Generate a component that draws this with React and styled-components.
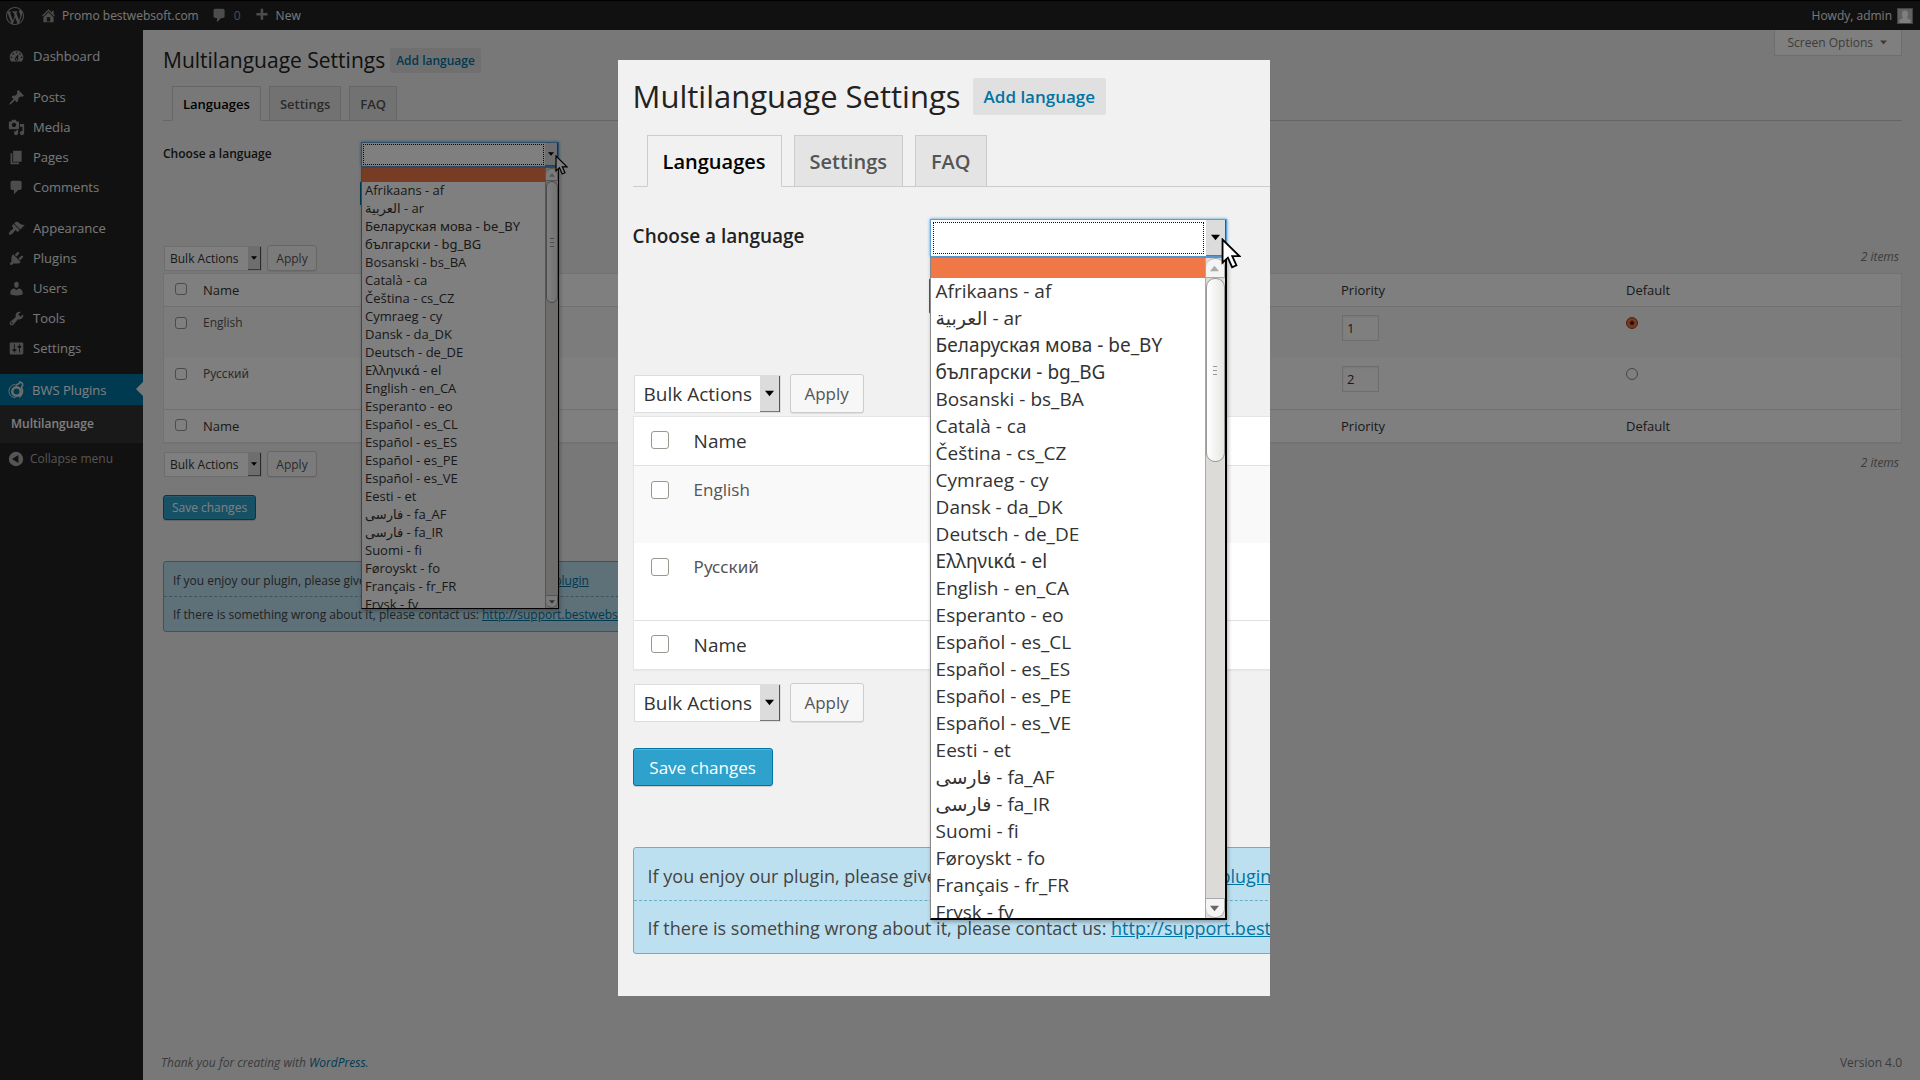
import React, { useId } from "react";
import styled, { createGlobalStyle, ThemeProvider, css } from "styled-components";

const GlobalStyle = createGlobalStyle`
  *, *::before, *::after { box-sizing: border-box; }
  html, body { margin: 0; padding: 0; }
  body {
    background: #f1f1f1;
    color: #444;
    font-family: "Open Sans", "Noto Sans", "DejaVu Sans", sans-serif;
    font-size: 12px;
  }
  :lang(be), :lang(bg), :lang(ru), :lang(el) { font-family: "Noto Sans", "Open Sans", sans-serif; }
  button, input, select { font-family: inherit; margin: 0; }
  h1, p, ul { margin: 0; padding: 0; }
  ul { list-style: none; }
  a { color: #0074a2; }
`;

/* Two densities of the same settings panel: the page itself and the enlarged lens. */
const compact = {
  title: 21, small: 12, text: 12, label: 12, note: 12, strong: 13, tab: 13, option: 13, select: 12,
  padTop: 18, headGap: 5, headHeight: 25, headPad: 6, headBottom: 13,
  tabHeight: 35, tabPad: 10, tabGap: 8, tabInset: 9,
  formTop: 21, labelWidth: 197, labelLift: 2, selectWidth: 198, fieldHeight: 25, focusInset: 2,
  addTop: 14, addHeight: 25, navTop: 39, arrow: 13, glyph: 6,
  bulkWidth: 98, bulkPad: 5, bulkGap: 5, applyWidth: 50, navGap: 2,
  box: 12, boxCell: 39, boxPad: 11, headRow: 32, row: 51, cellTop: 8, boxTop: 2, line: 16,
  afterTable: 8, saveTop: 18, saveWidth: 93,
  noteTop: 41, noteRow: 34, notePad: 9, noteLine: 33,
  popHeight: 442, popBlank: 14, popItem: 18, popLine: 16, popPad: 3, popEdge: 1,
  barCap: 13, thumb: 122,
  cursor: 13, cursorLeft: 194, cursorTop: 13,
};
const large = {
  title: 31, small: 17, text: 17, label: 19, note: 18, strong: 19, tab: 20, option: 19, select: 19,
  padTop: 18, headGap: 12, headHeight: 37, headPad: 11, headBottom: 20,
  tabHeight: 52, tabPad: 15, tabGap: 12, tabInset: 14,
  formTop: 32, labelWidth: 296, labelLift: 4, selectWidth: 297, fieldHeight: 38, focusInset: 3,
  addTop: 21, addHeight: 36, navTop: 60, arrow: 20, glyph: 9,
  bulkWidth: 147, bulkPad: 9, bulkGap: 9, applyWidth: 74, navGap: 3,
  box: 18, boxCell: 60, boxPad: 17, headRow: 48, row: 77, cellTop: 12, boxTop: 3, line: 24,
  afterTable: 13, saveTop: 26, saveWidth: 140,
  noteTop: 61, noteRow: 52, notePad: 14, noteLine: 52,
  popHeight: 663, popBlank: 20, popItem: 27, popLine: 27, popPad: 5, popEdge: 2,
  barCap: 20, thumb: 184,
  cursor: 20, cursorLeft: 291, cursorTop: 19,
};
const px = (key) => ({ theme }) => `${theme[key]}px`;

/* ---------- admin bar ---------- */
const TopBar = styled.header`
  display: flex;
  align-items: center;
  height: 30px;
  padding: 0 7px 0 6px;
  border-top: 1px solid #000;
  background: #222;
  color: #eee;
`;
const BarLink = styled.a`
  display: flex;
  align-items: center;
  gap: ${({ $gap = 8 }) => $gap}px;
  margin-right: ${({ $after = 13 }) => $after}px;
  color: ${({ $muted }) => ($muted ? "#999" : "#eee")};
  text-decoration: none;
  white-space: nowrap;
  svg { color: #999; }
`;
const Account = styled(BarLink)`
  margin: 0 0 0 auto;
`;
const Avatar = styled.span`
  display: block;
  width: 16px;
  height: 16px;
  border: 1px solid #82878c;
  background: #c3c3c3;
  svg { display: block; color: #fff; }
`;

/* ---------- side menu ---------- */
const Shell = styled.div`
  display: flex;
  min-height: calc(100vh - 30px);
`;
const Side = styled.nav`
  flex: none;
  width: 143px;
  padding-top: 11px;
  background: #222;
`;
const MenuGroup = styled.ul`
  margin-bottom: 11px;
`;
const MenuLink = styled.a`
  position: relative;
  display: flex;
  align-items: center;
  gap: 8px;
  height: ${({ $active }) => ($active ? 31 : 30)}px;
  padding-left: 8px;
  color: ${({ $active }) => ($active ? "#fff" : "#eee")};
  font-size: 13px;
  text-decoration: none;
  svg { flex: none; color: #999; }
  ${({ $active }) => $active && css`
    background: #0074a2;
    svg { color: #ddd; }
    &::after {
      content: "";
      position: absolute;
      right: 0;
      top: 8px;
      border: 7px solid transparent;
      border-left-width: 0;
      border-right-color: #f1f1f1;
    }
  `}
`;
const SubLink = styled.a`
  display: flex;
  align-items: center;
  height: 38px;
  padding: 0 0 2px 11px;
  background: #333;
  color: #fff;
  font-weight: 600;
  text-decoration: none;
`;
const Collapse = styled.button`
  display: flex;
  align-items: center;
  gap: 6px;
  height: 31px;
  padding: 0 0 0 8px;
  border: 0;
  background: none;
  color: #aaa;
  font-size: 12px;
  svg { color: #aaa; }
`;

/* ---------- page body ---------- */
const Content = styled.div`
  position: relative;
  display: flex;
  flex: 1;
  flex-direction: column;
  min-width: 0;
  padding: 0 18px 8px 20px;
`;
const ScreenOptions = styled.button`
  position: absolute;
  top: 0;
  right: 18px;
  display: flex;
  align-items: center;
  gap: 7px;
  height: 26px;
  padding: 0 14px 0 13px;
  border: 1px solid #ddd;
  border-top: 0;
  background: #fff;
  color: #777;
  font-size: 12px;
`;
const Footer = styled.footer`
  display: flex;
  justify-content: space-between;
  margin: auto 0 0 -2px;
  color: #777;
  font-size: 12px;
  line-height: 18px;
  a { text-decoration: none; }
`;

/* ---------- settings panel ---------- */
const Panel = styled.section`
  padding-top: ${px("padTop")};
  color: #444;
  font-size: ${px("text")};
`;
const Heading = styled.div`
  display: flex;
  align-items: center;
  gap: ${px("headGap")};
  height: ${px("headHeight")};
  margin-bottom: ${px("headBottom")};
`;
const Title = styled.h1`
  color: #222;
  font-size: ${px("title")};
  font-weight: 400;
  line-height: ${px("headHeight")};
  white-space: nowrap;
`;
const HeadLink = styled.a`
  padding: 0 ${px("headPad")};
  border-radius: 2px;
  background: #e0e0e0;
  font-size: ${px("small")};
  font-weight: 600;
  line-height: ${px("headHeight")};
  text-decoration: none;
  white-space: nowrap;
`;
const Tabs = styled.div`
  display: flex;
  gap: ${px("tabGap")};
  padding-left: ${px("tabInset")};
  border-bottom: 1px solid #ccc;
`;
const Tab = styled.a`
  display: flex;
  align-items: center;
  height: ${px("tabHeight")};
  margin-bottom: -1px;
  padding: 0 ${px("tabPad")};
  border: 1px solid #ccc;
  border-bottom-color: ${({ $active }) => ($active ? "#f1f1f1" : "#ccc")};
  background: ${({ $active }) => ($active ? "#f1f1f1" : "#e4e4e4")};
  color: ${({ $active }) => ($active ? "#000" : "#555")};
  font-size: ${px("tab")};
  font-weight: 600;
  text-decoration: none;
`;
const FormRow = styled.div`
  display: flex;
  align-items: center;
  margin-top: ${px("formTop")};
`;
const FieldLabel = styled.label`
  flex: none;
  width: ${px("labelWidth")};
  padding-bottom: ${px("labelLift")};
  color: #222;
  font-size: ${px("label")};
  font-weight: 600;
`;
const Picker = styled.div`
  position: relative;
  width: ${({ theme, $wide }) => ($wide ? theme.selectWidth : theme.bulkWidth)}px;
  margin-left: 1px;
`;
const Select = styled.select`
  display: block;
  width: 100%;
  height: ${px("fieldHeight")};
  padding: 0 ${px("arrow")} 0 ${px("bulkPad")};
  border: 1px solid ${({ $focused }) => ($focused ? "#5b9dd9" : "#ddd")};
  border-radius: 0;
  outline: 0;
  appearance: none;
  background: #fff;
  box-shadow: ${({ $focused }) => ($focused ? "0 0 3px rgba(30, 140, 190, 0.8)" : "none")};
  color: #333;
  font-size: ${px("select")};
`;
const Arrow = styled.span`
  position: absolute;
  top: 1px;
  right: 1px;
  bottom: 1px;
  display: flex;
  align-items: center;
  justify-content: center;
  width: ${px("arrow")};
  border-right: 1px solid #555;
  border-bottom: 1px solid #777;
  background: #dcdcdc;
  color: #000;
  pointer-events: none;
`;
const FocusRing = styled.span`
  position: absolute;
  top: ${px("focusInset")};
  bottom: ${px("focusInset")};
  left: ${px("focusInset")};
  right: ${({ theme }) => theme.arrow + theme.focusInset}px;
  border: 1px dotted #111;
  pointer-events: none;
`;
const Cursor = styled.svg`
  position: absolute;
  z-index: 3;
  left: ${px("cursorLeft")};
  top: ${px("cursorTop")};
  width: ${px("cursor")};
`;
const Popup = styled.div`
  position: absolute;
  z-index: 2;
  top: 100%;
  left: 0;
  display: flex;
  width: 100%;
  height: ${px("popHeight")};
  border: 1px solid #888;
  border-right: ${px("popEdge")} solid #000;
  border-bottom: ${px("popEdge")} solid #000;
  background: #fff;
  box-shadow: 1px 2px 4px rgba(0, 0, 0, 0.3);
`;
const Options = styled.ul`
  flex: 1;
  min-width: 0;
  overflow: hidden;
`;
const Option = styled.li`
  height: ${({ theme, $blank }) => ($blank ? theme.popBlank : theme.popItem)}px;
  padding-left: ${px("popPad")};
  background: ${({ $blank }) => ($blank ? "#f07746" : "transparent")};
  color: #333;
  font-size: ${px("option")};
  line-height: ${px("popLine")};
  white-space: nowrap;
`;
const Bar = styled.div`
  display: flex;
  flex: none;
  flex-direction: column;
  width: ${px("barCap")};
  border-left: 1px solid #aaa;
  background: #dddbd8;
`;
const BarEnd = styled.span`
  display: flex;
  align-items: center;
  justify-content: center;
  height: ${px("barCap")};
  border: 1px solid #aaa;
  border-radius: ${({ $up }) => ($up ? "9px 9px 0 0" : "0 0 9px 9px")};
  border-left: 0;
  background: #f4f4f4;
  color: ${({ $up }) => ($up ? "#aaa" : "#666")};
`;
const Thumb = styled.span`
  display: flex;
  flex-direction: column;
  align-items: center;
  justify-content: center;
  gap: 3px;
  height: ${px("thumb")};
  margin-bottom: auto;
  border: 1px solid #999;
  border-radius: 9px;
  background: linear-gradient(90deg, #fff, #e6e6e4);
  i { width: 4px; height: 1px; background: #999; }
`;
const AddButton = styled.button`
  display: block;
  height: ${px("addHeight")};
  margin: ${px("addTop")} 0 0 ${px("labelWidth")};
  padding: 0 ${px("notePad")};
  border: 1px solid #0074a2;
  border-radius: 2px;
  background: #2ea2cc;
  color: #fff;
  font-size: ${px("small")};
`;
const TableNav = styled.div`
  display: flex;
  align-items: center;
  gap: ${px("bulkGap")};
  margin: ${({ theme, $top }) => ($top ? `${theme.navTop}px 0 ${theme.navGap}px` : `${theme.afterTable}px 0 0`)};
`;
const Apply = styled.button`
  width: ${px("applyWidth")};
  height: ${({ theme }) => theme.fieldHeight + 1}px;
  padding: 0;
  border: 1px solid #ccc;
  border-radius: 3px;
  background: #f7f7f7;
  box-shadow: 0 1px 0 rgba(0, 0, 0, 0.08);
  color: #555;
  font-size: ${px("small")};
`;
const Count = styled.span`
  margin: 0 3px 4px auto;
  color: #777;
  font-size: 12px;
  font-style: italic;
`;
const Table = styled.table`
  width: 100%;
  border: 1px solid #e5e5e5;
  border-right-width: ${({ $open }) => ($open ? 0 : 1)}px;
  border-spacing: 0;
  background: #fff;
  table-layout: fixed;
  box-shadow: 0 1px 1px rgba(0, 0, 0, 0.04);
  th, td { padding: 0; text-align: left; }
  th {
    height: ${({ theme }) => theme.headRow + 1}px;
    color: #333;
    font-size: ${px("strong")};
    font-weight: 400;
  }
  thead th { border-bottom: 1px solid #e1e1e1; }
  tfoot th { border-top: 1px solid #e1e1e1; }
  td {
    height: ${px("row")};
    padding-top: ${px("cellTop")};
    color: #555;
    line-height: ${px("line")};
    vertical-align: top;
  }
  tbody tr:first-child { background: #f9f9f9; }
`;
const BoxCol = styled.col`
  width: ${px("boxCell")};
`;
const WideCol = styled.col`
  width: ${({ $last }) => ($last ? 275 : 285)}px;
`;
const Check = styled.input`
  display: block;
  width: ${px("box")};
  height: ${px("box")};
  margin: 0 0 0 ${px("boxPad")};
  border: 1px solid #9a9690;
  border-radius: 3px;
  appearance: none;
  background: #fff;
  th & { position: relative; top: -1px; }
  td & { margin-top: ${px("boxTop")}; }
`;
const Radio = styled.input`
  display: block;
  width: 12px;
  height: 12px;
  margin-top: 2px;
  border: 1px solid #888;
  border-radius: 50%;
  appearance: none;
  background: #fff;
  &:checked {
    border-color: #9c3d17;
    background: radial-gradient(circle, #3a1405 0 1px, #f07746 3px);
  }
`;
const Priority = styled.input`
  display: block;
  width: 37px;
  height: 26px;
  margin-left: 1px;
  padding: 2px 4px;
  border: 1px solid #ddd;
  background: #fff;
  box-shadow: inset 0 1px 2px rgba(0, 0, 0, 0.07);
  color: #333;
  font-size: 13px;
`;
const Save = styled.button`
  display: block;
  width: ${px("saveWidth")};
  height: ${px("fieldHeight")};
  margin-top: ${px("saveTop")};
  padding: 0;
  border: 1px solid #0074a2;
  border-radius: 3px;
  background: #2ea2cc;
  box-shadow: inset 0 1px 0 rgba(120, 200, 230, 0.5), 0 1px 0 rgba(0, 0, 0, 0.15);
  color: #fff;
  font-size: ${px("small")};
`;
const Note = styled.div`
  width: max-content;
  margin-top: ${px("noteTop")};
  border: 1px solid #6eadc8;
  border-radius: 3px;
  background: #bde0f0;
  font-size: ${px("note")};
  p {
    height: ${px("noteRow")};
    padding: 2px ${px("notePad")} 0;
    color: #444;
    line-height: ${px("noteLine")};
    white-space: nowrap;
  }
  p + p {
    height: ${({ theme }) => theme.noteRow + 1}px;
    padding-top: 1px;
    border-top: 1px dashed #6eadc8;
  }
`;

/* ---------- lens ---------- */
const Overlay = styled.div`
  position: fixed;
  z-index: 10;
  inset: 0;
  display: flex;
  align-items: flex-start;
  justify-content: center;
  padding: 60px 32px 0 0;
  background: rgba(0, 0, 0, 0.5);
`;
const Lens = styled.div`
  width: 34vw;
  padding: 0 0 42px 15px;
  overflow: hidden;
  background: #f1f1f1;
`;

/* ---------- icons ---------- */
const icons = {
  wordpress: "M20 10c0-5.51-4.49-10-10-10C4.48 0 0 4.49 0 10c0 5.52 4.48 10 10 10 5.51 0 10-4.48 10-10zM7.78 15.37L4.37 6.22c.55-.02 1.17-.08 1.17-.08.5-.06.44-1.13-.06-1.11 0 0-1.45.11-2.37.11-.18 0-.37 0-.58-.01C4.12 2.69 6.87 1.11 10 1.11c2.33 0 4.45.87 6.05 2.34-.68-.11-1.65.39-1.65 1.58 0 .74.45 1.36.9 2.1.35.61.55 1.36.55 2.46 0 1.49-1.4 5-1.4 5l-3.03-8.37c.54-.02.82-.17.82-.17.5-.05.44-1.25-.06-1.22 0 0-1.44.12-2.38.12-.87 0-2.33-.12-2.33-.12-.5-.03-.56 1.2-.06 1.22l.92.08 1.26 3.41zM17.41 10c.24-.64.74-1.87.43-4.25.7 1.29 1.05 2.71 1.05 4.25 0 3.29-1.73 6.24-4.4 7.78.97-2.59 1.94-5.2 2.92-7.78zM6.1 18.09C3.12 16.65 1.11 13.53 1.11 10c0-1.3.23-2.48.72-3.59C3.25 10.3 4.67 14.2 6.1 18.09zm4.03-6.63l2.58 6.98c-.86.29-1.76.45-2.71.45-.79 0-1.57-.11-2.29-.33.81-2.38 1.62-4.74 2.42-7.1z",
  home: "M16 8.5l1.53 1.53-1.06 1.06L10 4.6l-6.47 6.49-1.06-1.06L10 2.5l4 4v-2h2v4zm-6-2.46l6 5.99V18H4v-5.97zM12 17v-5H8v5h4z",
  comment: "M5 2h9c1.1 0 2 .9 2 2v7c0 1.1-.9 2-2 2h-2l-5 5v-5H5c-1.1 0-2-.9-2-2V4c0-1.1.9-2 2-2z",
  plus: "M17 7v3h-5v5H9v-5H4V7h5V2h3v5h5z",
  dashboard: "M3.76 16h12.48c1.1-1.37 1.76-3.11 1.76-5 0-4.42-3.58-8-8-8s-8 3.58-8 8c0 1.89.66 3.63 1.76 5zM10 4c.55 0 1 .45 1 1s-.45 1-1 1-1-.45-1-1 .45-1 1-1zM6 6c.55 0 1 .45 1 1s-.45 1-1 1-1-.45-1-1 .45-1 1-1zm8 0c.55 0 1 .45 1 1s-.45 1-1 1-1-.45-1-1 .45-1 1-1zm-5.37 5.55L12 7v6c0 1.1-.9 2-2 2s-2-.9-2-2c0-.57.24-1.08.63-1.45zM4 10c.55 0 1 .45 1 1s-.45 1-1 1-1-.45-1-1 .45-1 1-1zm12 0c.55 0 1 .45 1 1s-.45 1-1 1-1-.45-1-1 .45-1 1-1zm-5 3c0-.55-.45-1-1-1s-1 .45-1 1 .45 1 1 1 1-.45 1-1z",
  post: "M10.44 3.02l1.82-1.82 6.36 6.35-1.83 1.82c-1.05-.68-2.48-.57-3.41.36l-.75.75c-.92.93-1.04 2.35-.35 3.41l-1.83 1.82-2.41-2.41-2.8 2.79c-.42.42-3.38 2.71-3.8 2.29s1.86-3.39 2.28-3.81l2.79-2.79L4.1 9.36l1.83-1.82c1.05.69 2.48.57 3.4-.36l.75-.75c.93-.92 1.05-2.35.36-3.41z",
  media: "M13 11V4c0-.55-.45-1-1-1h-1.67L9 1H5L3.67 3H2c-.55 0-1 .45-1 1v7c0 .55.45 1 1 1h10c.55 0 1-.45 1-1zM7 4.5c1.38 0 2.5 1.12 2.5 2.5S8.38 9.5 7 9.5 4.5 8.38 4.5 7 5.62 4.5 7 4.5zM14 6h5v10.5c0 1.38-1.12 2.5-2.5 2.5S14 17.88 14 16.5s1.12-2.5 2.5-2.5c.17 0 .34.02.5.05V9h-3V6zm-4 8.05V13h2v3.5c0 1.38-1.12 2.5-2.5 2.5S7 17.88 7 16.5 8.12 14 9.5 14c.17 0 .34.02.5.05z",
  page: "M6 15V2h10v13H6zm-1 1h8v2H3V5h2v11z",
  appearance: "M14.48 11.06L7.41 3.99l1.5-1.5c.5-.56 2.3-.47 3.51.32 1.21.8 1.43 1.28 2.91 2.1 1.18.64 2.45 1.26 4.45.85zm-.71.71L6.7 4.7 4.93 6.47c-.39.39-.39 1.02 0 1.41l1.06 1.06c.39.39.39 1.03 0 1.42-.6.6-1.43 1.11-2.21 1.69-.35.26-.7.53-1.01.84C1.43 14.23.4 16.08 1.4 17.07c.99 1 2.84-.03 4.18-1.36.31-.31.58-.66.85-1.02.57-.78 1.08-1.61 1.69-2.21.39-.39 1.02-.39 1.41 0l1.06 1.06c.39.39 1.02.39 1.41 0z",
  plugins: "M13.11 4.36L9.87 7.6 8 5.73l3.24-3.24c.35-.34 1.05-.2 1.56.32.52.51.66 1.21.31 1.55zm-8 1.77l.91-1.12 9.01 9.01-1.19.84c-.71.71-2.63 1.16-3.82 1.16H6.14L4.9 17.26c-.59.59-1.54.59-2.12 0-.59-.58-.59-1.53 0-2.12l1.24-1.24v-3.88c0-1.13.4-3.19 1.09-3.89zm7.26 3.97l3.24-3.24c.34-.35 1.04-.21 1.55.31.52.51.66 1.21.31 1.55l-3.24 3.25z",
  users: "M10 9.25c-2.27 0-2.73-3.44-2.73-3.44C7 4.02 7.82 2 9.97 2c2.16 0 2.98 2.02 2.71 3.81 0 0-.41 3.44-2.68 3.44zm0 2.57L12.72 10c2.39 0 4.52 2.33 4.52 4.53v2.49s-3.65 1.13-7.24 1.13c-3.65 0-7.24-1.13-7.24-1.13v-2.49c0-2.25 1.94-4.48 4.47-4.48z",
  tools: "M16.68 9.77c-1.34 1.34-3.3 1.67-4.95.99l-5.41 6.52c-.99.99-2.59.99-3.58 0s-.99-2.59 0-3.57l6.52-5.42c-.68-1.65-.35-3.61.99-4.95 1.28-1.28 3.12-1.62 4.72-1.06l-2.89 2.89 2.82 2.82 2.86-2.87c.53 1.58.18 3.39-1.08 4.65zM3.81 16.21c.4.39 1.04.39 1.43 0 .4-.4.4-1.04 0-1.43-.39-.4-1.03-.4-1.43 0-.39.39-.39 1.03 0 1.43z",
  settings: "M18 16V4c0-.55-.45-1-1-1H3c-.55 0-1 .45-1 1v12c0 .55.45 1 1 1h14c.55 0 1-.45 1-1zM8 11h1c.55 0 1 .45 1 1s-.45 1-1 1H8v1.500c0 .28-.22.5-.5.5s-.5-.22-.5-.5V13H6c-.55 0-1-.45-1-1s.45-1 1-1h1V5.500c0-.28.22-.5.5-.5s.5.22.5.5V11zm5-2h-1c-.55 0-1-.45-1-1s.45-1 1-1h1V5.500c0-.28.22-.5.5-.5s.5.22.5.5V7h1c.55 0 1 .45 1 1s-.45 1-1 1h-1v5.500c0 .28-.22.5-.5.5s-.5-.22-.5-.5V9z",
  collapse: "M10 1a9 9 0 1 0 0 18 9 9 0 0 0 0-18zm3 4v10l-8-5z",
};
const Icon = ({ name, size = 18 }) => (
  <svg width={size} height={size} viewBox="0 0 20 20" fill="currentColor" fillRule="evenodd" aria-hidden="true">
    <path d={icons[name]} />
  </svg>
);
const SwirlIcon = () => (
  <svg width="16" height="18" viewBox="0 0 16 18" fill="none" stroke="currentColor" aria-hidden="true">
    <circle cx="8.5" cy="10.500" r="4.200" strokeWidth="2.400" />
    <path d="M7 3.5C3 4 .8 7 1 10.500C1.200 14 3.500 16.500 7.500 16.500" strokeWidth="1" />
    <path d="M7.500 4.500C10 2 12.500 3 12 1C15 1.500 15.500 4 13.500 6.500C15.500 10 14.500 14 11 16" strokeWidth="1.600" />
  </svg>
);
const Triangle = ({ size, up }) => (
  <svg width={size} height={size} viewBox="0 0 10 10" fill="currentColor" aria-hidden="true">
    <path d={up ? "M0 8L5 2L10 8Z" : "M0 2H10L5 8Z"} />
  </svg>
);

/* ---------- data ---------- */
const languages = [
  ["Afrikaans - af"], ["العربية - ar"], ["Беларуская мова - be_BY", "be"], ["български - bg_BG", "bg"],
  ["Bosanski - bs_BA"], ["Català - ca"], ["Čeština - cs_CZ"], ["Cymraeg - cy"], ["Dansk - da_DK"],
  ["Deutsch - de_DE"], ["Ελληνικά - el", "el"], ["English - en_CA"], ["Esperanto - eo"], ["Español - es_CL"],
  ["Español - es_ES"], ["Español - es_PE"], ["Español - es_VE"], ["Eesti - et"], ["فارسی - fa_AF"],
  ["فارسی - fa_IR"], ["Suomi - fi"], ["Føroyskt - fo"], ["Français - fr_FR"], ["Frysk - fy"],
];
const enabled = [
  { name: "English", lang: "en", priority: 1, isDefault: true },
  { name: "Русский", lang: "ru", priority: 2, isDefault: false },
];
const menu = [
  [["dashboard", "Dashboard"]],
  [["post", "Posts"], ["media", "Media"], ["page", "Pages"], ["comment", "Comments"]],
  [["appearance", "Appearance"], ["plugins", "Plugins"], ["users", "Users"], ["tools", "Tools"], ["settings", "Settings"]],
];

function LanguagePicker({ id, t }) {
  return (
    <Picker $wide>
      <Select id={id} $focused defaultValue="">
        <option value="" aria-label="No language" />
      </Select>
      <FocusRing />
      <Arrow><Triangle size={t.glyph} /></Arrow>
      <Popup>
        <Options role="listbox" aria-label="Languages">
          <Option role="option" aria-selected="true" aria-label="No language" $blank />
          {languages.map(([name, lang]) => (
            <Option key={name} lang={lang} role="option" aria-selected="false">{name}</Option>
          ))}
        </Options>
        <Bar aria-hidden="true">
          <BarEnd $up><Triangle size={t.glyph} up /></BarEnd>
          <Thumb><i /><i /><i /></Thumb>
          <BarEnd><Triangle size={t.glyph} /></BarEnd>
        </Bar>
      </Popup>
      <Cursor viewBox="0 0 13 20" aria-hidden="true">
        <path d="M1 1V16L4.500 12.800L7.200 19L10 17.700L7.300 11.800H12Z" fill="#fff" stroke="#000" strokeWidth="1.200" />
      </Cursor>
    </Picker>
  );
}

function BulkNav({ t, top, count }) {
  return (
    <TableNav $top={top}>
      <Picker>
        <Select aria-label="Bulk Actions" defaultValue="bulk">
          <option value="bulk">Bulk Actions</option>
        </Select>
        <Arrow><Triangle size={t.glyph} /></Arrow>
      </Picker>
      <Apply type="button">Apply</Apply>
      {count && <Count>2 items</Count>}
    </TableNav>
  );
}

function LanguageTable({ full, group }) {
  const labels = (
    <tr>
      <th scope="col"><Check type="checkbox" aria-label="Select all" /></th>
      <th scope="col">Name</th>
      {full && <th scope="col">Priority</th>}
      {full && <th scope="col">Default</th>}
    </tr>
  );
  return (
    <Table $open={!full}>
      <colgroup>
        <BoxCol />
        <col />
        {full && <WideCol />}
        {full && <WideCol $last />}
      </colgroup>
      <thead>{labels}</thead>
      <tbody>
        {enabled.map(({ name, lang, priority, isDefault }) => (
          <tr key={name}>
            <td><Check type="checkbox" aria-label={`Select ${name}`} /></td>
            <td lang={lang}>{name}</td>
            {full && <td><Priority type="text" defaultValue={priority} aria-label={`Priority of ${name}`} /></td>}
            {full && <td><Radio type="radio" name={group} defaultChecked={isDefault} aria-label={`${name} is default`} /></td>}
          </tr>
        ))}
      </tbody>
      <tfoot>{labels}</tfoot>
    </Table>
  );
}

function SettingsPanel({ t, full }) {
  const id = useId();
  return (
    <ThemeProvider theme={t}>
      <Panel>
        <Heading>
          <Title>Multilanguage Settings</Title>
          <HeadLink href="#add">Add language</HeadLink>
        </Heading>
        <Tabs>
          <Tab href="#languages" $active>Languages</Tab>
          <Tab href="#settings">Settings</Tab>
          <Tab href="#faq">FAQ</Tab>
        </Tabs>
        <FormRow>
          <FieldLabel htmlFor={id}>Choose a language</FieldLabel>
          <LanguagePicker id={id} t={t} />
        </FormRow>
        <AddButton type="button">Add</AddButton>
        <BulkNav t={t} top count={full} />
        <LanguageTable full={full} group={id} />
        <BulkNav t={t} count={full} />
        <Save type="button">Save changes</Save>
        <Note>
          <p>If you enjoy our plugin, please give it 5 stars on WordPress: <a href="#rate">Rate the plugin</a></p>
          <p>If there is something wrong about it, please contact us: <a href="#support">http://support.bestwebsoft.com</a></p>
        </Note>
      </Panel>
    </ThemeProvider>
  );
}

export default function App() {
  return (
    <>
      <GlobalStyle />
      <TopBar>
        <BarLink href="#wp" aria-label="About WordPress" $after={16}><Icon name="wordpress" /></BarLink>
        <BarLink href="#site" $gap={5} $after={12}><Icon name="home" size={17} />Promo bestwebsoft.com</BarLink>
        <BarLink href="#comments" $muted $gap={6} $after={12}><Icon name="comment" size={17} />0</BarLink>
        <BarLink href="#new" $gap={6}><Icon name="plus" size={17} />New</BarLink>
        <Account href="#profile" $gap={5}>
          Howdy, admin
          <Avatar>
            <svg width="14" height="14" viewBox="0 0 14 14" fill="currentColor" aria-hidden="true">
              <path d="M7 1.500C9 1.500 10 3 10 5C10 7 9.300 8.300 9 9L12.500 11V14H1.500V11L5 9C4.700 8.300 4 7 4 5C4 3 5 1.500 7 1.500Z" />
            </svg>
          </Avatar>
        </Account>
      </TopBar>
      <Shell>
        <Side aria-label="Main menu">
          {menu.map((group) => (
            <MenuGroup key={group[0][1]}>
              {group.map(([icon, label]) => (
                <li key={label}>
                  <MenuLink href={`#${icon}`}><Icon name={icon} size={17} />{label}</MenuLink>
                </li>
              ))}
            </MenuGroup>
          ))}
          <MenuLink href="#bws" $active><SwirlIcon />BWS Plugins</MenuLink>
          <SubLink href="#multilanguage">Multilanguage</SubLink>
          <Collapse type="button"><Icon name="collapse" size={16} />Collapse menu</Collapse>
        </Side>
        <Content>
          <ScreenOptions type="button">Screen Options <Triangle size={7} /></ScreenOptions>
          <SettingsPanel t={compact} full />
          <Footer>
            <i>Thank you for creating with <a href="#wordpress">WordPress.</a></i>
            <span>Version 4.0</span>
          </Footer>
        </Content>
      </Shell>
      <Overlay>
        <Lens role="dialog" aria-label="Language settings, enlarged">
          <SettingsPanel t={large} />
        </Lens>
      </Overlay>
    </>
  );
}
